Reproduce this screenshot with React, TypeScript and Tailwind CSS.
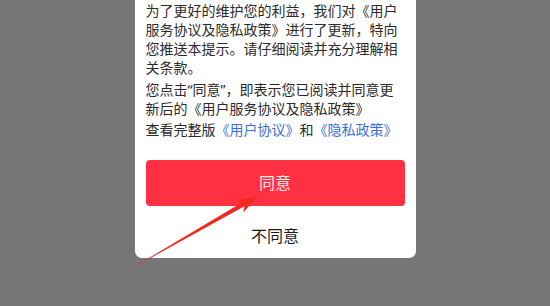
export default function App() {
  const font = { fontFamily: '"Noto Sans", "Noto Sans CJK SC", sans-serif' };
  return (
    <div
      className="relative w-[550px] h-[306px] overflow-hidden bg-[#767676]"
      style={font}
    >
      <div className="mx-auto w-[281px] bg-white rounded-b-[7px] px-[11px]">
        <div className="text-[14px] leading-[19px] text-[#2b2b2b]">
          <p className="pt-[1px]">
            为了更好的维护您的利益，我们对《用户服务协议及隐私政策》进行了更新，特向您推送本提示。请仔细阅读并充分理解相关条款。
          </p>
          <p className="mt-[3px]">
            您点击“同意”，即表示您已阅读并同意更新后的《用户服务协议及隐私政策》
          </p>
          <p className="mt-[2px]">
            查看完整版<span className="text-[#3b6fdc]">《用户协议》</span>和
            <span className="text-[#3b6fdc]">《隐私政策》</span>
          </p>
        </div>
        <button className="mt-[21px] w-full h-[46px] rounded-[4px] bg-[#fe3041] text-[16px] text-white/90 flex items-center justify-center">
          同意
        </button>
        <div className="mt-[8px] h-[44px] flex items-center justify-center text-[16px] text-[#1a1a1a]">
          不同意
        </div>
      </div>

      <svg
        className="absolute inset-0 pointer-events-none"
        width="550"
        height="306"
        viewBox="0 0 550 306"
      >
        <polygon
          points="127,271 242,202.6 236.5,201.2 258,196 243.3,212.6 244.4,206.2"
          fill="#f2271f"
        />
      </svg>
    </div>
  );
}
